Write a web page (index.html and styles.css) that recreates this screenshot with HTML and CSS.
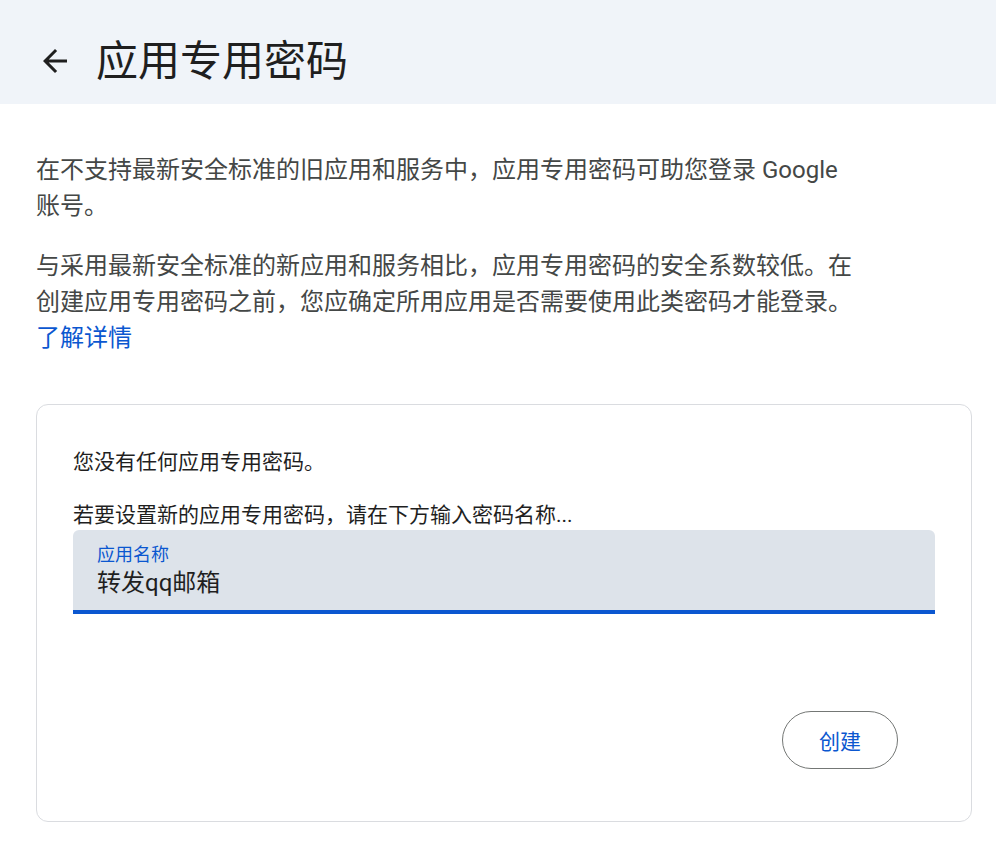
FILE: index.html
```html
<!DOCTYPE html>
<html lang="zh-CN">
<head>
  <meta charset="UTF-8" />
  <title>应用专用密码</title>
  <link rel="stylesheet" href="styles.css">
</head>
<body>

  <header class="topbar">
    <a class="back" href="#" aria-label="返回">
      <svg viewBox="0 -960 960 960" width="36" height="36">
        <path d="M313-440l224 224-57 56-320-320 320-320 57 56-224 224h487v80H313Z" fill="#1f1f1f"/>
      </svg>
    </a>
    <h1>应用专用密码</h1>
  </header>

  <main class="content">
    <p class="intro">在不支持最新安全标准的旧应用和服务中，应用专用密码可助您登录 Google 账号。</p>
    <p class="intro">与采用最新安全标准的新应用和服务相比，应用专用密码的安全系数较低。在创建应用专用密码之前，您应确定所用应用是否需要使用此类密码才能登录。<br><a class="link" href="#">了解详情</a></p>

    <section class="card">
      <p class="card-text">您没有任何应用专用密码。</p>
      <p class="card-text hint">若要设置新的应用专用密码，请在下方输入密码名称...</p>

      <label class="field">
        <span class="field-label">应用名称</span>
        <input class="field-input" type="text" value="转发qq邮箱">
      </label>

      <div class="actions">
        <button class="btn" type="button">创建</button>
      </div>
    </section>
  </main>

</body>
</html>
```

FILE: styles.css
```css
body {
  margin: 0;
  font-family: Roboto, "Noto Sans CJK SC", sans-serif;
  background-color: #fff;
  color: #1f1f1f;
}

.topbar {
  height: 104px;
  background-color: #f0f4f9;
  display: flex;
  align-items: center;
  padding-left: 37px;
  padding-top: 20px;
  box-sizing: border-box;
}

.back {
  display: flex;
  width: 36px;
  height: 36px;
  margin-right: 23px;
  margin-top: -2px;
}

.topbar h1 {
  margin: 0;
  font-size: 42px;
  font-weight: 400;
  line-height: 56px;
  color: #1f1f1f;
}

.content {
  padding: 48px 24px 0 36px;
}

.intro {
  max-width: 820px;
  margin: 0 0 24px;
  font-size: 24px;
  line-height: 36px;
  color: #444746;
}

.link {
  color: #0b57d0;
  text-decoration: none;
}

.card {
  margin-top: 48px;
  border: 1px solid #dadce0;
  border-radius: 12px;
  padding: 42px 36px 52px;
}

.card-text {
  margin: 0;
  font-size: 21px;
  line-height: 30px;
  color: #1f1f1f;
}

.hint {
  margin-top: 23px;
}

.field {
  display: flex;
  flex-direction: column;
  background-color: #dde3ea;
  border-radius: 6px 6px 0 0;
  border-bottom: 4px solid #0b57d0;
  padding: 13px 24px 11px;
}

.field-label {
  font-size: 18px;
  line-height: 24px;
  color: #0b57d0;
}

.field-input {
  border: none;
  background: transparent;
  padding: 0;
  outline: none;
  font-family: inherit;
  font-size: 24px;
  line-height: 32px;
  height: 32px;
  color: #1f1f1f;
}

.actions {
  display: flex;
  justify-content: flex-end;
  margin-top: 97px;
  padding-right: 37px;
}

.btn {
  height: 58px;
  padding: 0 36px;
  border: 1px solid #747775;
  border-radius: 29px;
  background: #fff;
  font-family: inherit;
  font-size: 21px;
  color: #0b57d0;
  cursor: pointer;
}
```
